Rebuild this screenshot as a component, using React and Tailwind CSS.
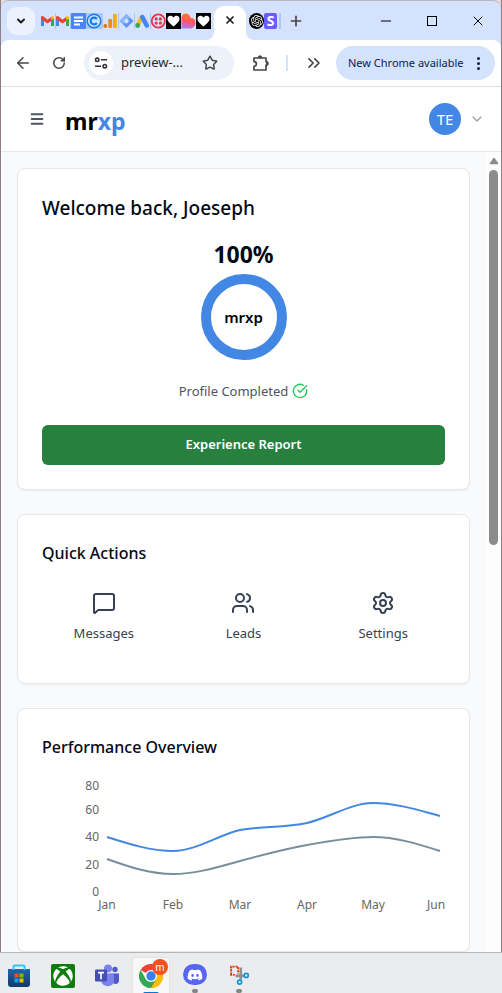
import React from "react";
import { ArrowLeft, RotateCw, Star, ChevronsRight, ChevronDown, MessageSquare, Users, Settings, CircleCheckBig, Menu, X, Plus, Minus } from "lucide-react";
import { FaDiscord, FaXbox } from "react-icons/fa";
import { SiOpenai } from "react-icons/si";

function Gmail() {
  return (
    <svg viewBox="0 0 15 16" className="h-4 w-[15px] shrink-0">
      <path d="M14.500 0v16" stroke="#a8c7fa" />
      <path d="M0 13V4l3 2v7z" fill="#4285f4" />
      <path d="M10 13V6l3-2v9z" fill="#34a853" />
      <path d="M10 6.500V3.500L12 3l1 1v2z" fill="#fbbc04" />
      <path d="M0 6V3.500L2 3l4.500 3.700L10 4v4L6.500 10.500z" fill="#ea4335" />
    </svg>
  );
}

function Docs() {
  return (
    <svg viewBox="0 0 15 16" className="h-4 w-[15px] shrink-0">
      <rect width="15" height="16" rx="1" fill="#4c86f0" />
      <path d="M3 4.500h9M3 8h9M3 11.500h6" stroke="#fff" strokeWidth="1.800" />
    </svg>
  );
}

function Calendly() {
  return (
    <svg viewBox="0 0 16 16" className="h-4 w-4 shrink-0">
      <rect width="16" height="16" fill="#a8c9fb" />
      <circle cx="8" cy="8" r="6.800" fill="#c5e6ff" stroke="#1878f0" strokeWidth="1.400" />
      <path d="M10.800 6a3.400 3.400 0 1 0 0 4" fill="none" stroke="#1878f0" strokeWidth="2.200" />
    </svg>
  );
}

function Analytics() {
  return (
    <svg viewBox="0 0 16 16" className="h-4 w-4 shrink-0">
      <path d="M.500 0v16" stroke="#a8c7fa" />
      <rect x="11" y="1" width="3.800" height="14" rx="1.200" fill="#f9ab00" />
      <rect x="6.300" y="6" width="3.800" height="9" rx="1.200" fill="#e98a1f" />
      <circle cx="3.300" cy="13" r="1.900" fill="#e37400" />
    </svg>
  );
}

function TagManager() {
  return (
    <svg viewBox="0 0 16 16" className="h-4 w-4 shrink-0">
      <path d="M.500 0v16" stroke="#a8c7fa" />
      <path d="M8.500 1 15.500 8l-7 7-7-7z" fill="#5f94f3" />
      <path d="M8.500 1 12 4.500 5 11.500 1.500 8z" fill="#8ab4f8" />
      <path d="M8.500 5.300 11.200 8l-2.700 2.700L5.800 8z" fill="#d5e3fd" />
    </svg>
  );
}

function Ads() {
  return (
    <svg viewBox="0 0 16 16" className="h-4 w-4 shrink-0">
      <path d="M.500 0v16" stroke="#a8c7fa" />
      <path d="M8 3.500 3.800 12" stroke="#fbbc04" strokeWidth="4" />
      <path d="M8.300 4l4.500 8.500" stroke="#4285f4" strokeWidth="4.500" strokeLinecap="round" />
      <circle cx="3.700" cy="12.500" r="2.400" fill="#34a853" />
    </svg>
  );
}

function Twilio() {
  return (
    <svg viewBox="0 0 16 16" className="h-4 w-4 shrink-0">
      <path d="M.500 0v16" stroke="#a8c7fa" />
      <circle cx="8.300" cy="8" r="6.600" fill="#d4e0fb" stroke="#ee3248" strokeWidth="1.800" />
      <g fill="#ee3248">
        <circle cx="6.200" cy="5.900" r="1.600" />
        <circle cx="10.400" cy="5.900" r="1.600" />
        <circle cx="6.200" cy="10.100" r="1.600" />
        <circle cx="10.400" cy="10.100" r="1.600" />
      </g>
    </svg>
  );
}

function Heart() {
  return (
    <svg viewBox="0 0 15 16" className="h-4 w-[15px] shrink-0">
      <rect width="15" height="16" fill="#000" />
      <path d="M7.500 13.500C3 10 1.500 8 1.500 5.800 1.500 2.500 5.500 1.500 7.500 4.500c2-3 6-2 6 1.300 0 2.200-1.500 4.200-6 7.700z" fill="#fff" />
    </svg>
  );
}

function Lovable() {
  return (
    <svg viewBox="0 0 15 16" className="h-4 w-[15px] shrink-0">
      <defs>
        <linearGradient id="blend" x1="0.4" y1="0" x2="0.2" y2="1">
          <stop offset="0" stopColor="#ff7a1a" />
          <stop offset="0.5" stopColor="#ff5368" />
          <stop offset="1" stopColor="#a77bff" />
        </linearGradient>
      </defs>
      <path d="M.500 15.500V5C.500-1 9-1 9.500 5c3-.500 5 1.500 5 4.500 0 3.500-2 6-5.500 6z" fill="url(#blend)" />
    </svg>
  );
}

function SiteControls() {
  return (
    <svg viewBox="0 0 16 16" className="h-4 w-4" fill="none" stroke="#30343a" strokeWidth="1.600">
      <circle cx="4.200" cy="4.800" r="1.700" />
      <path d="M8 4.800h6M2 11.200h6" />
      <circle cx="11.800" cy="11.200" r="1.700" />
    </svg>
  );
}

function PuzzlePiece() {
  return (
    <svg viewBox="0 0 18 18" className="h-[18px] w-[18px]" fill="none" stroke="#474747" strokeWidth="1.700" strokeLinejoin="round">
      <path d="M2 4h12v3.700l1.500.600v2.400l-1.500.600V16H2v-3.600a2.400 2.400 0 0 0 0-4.800z" />
      <path d="M6.200 3.600a1.800 1.800 0 0 1 3.600 0zM14.500 7.800a1.700 1.700 0 0 1 0 3.400z" fill="#474747" strokeWidth="1" />
    </svg>
  );
}

function TabStrip() {
  return (
    <div className="flex h-10 rounded-t-lg border-t border-[#b9b4bd] bg-[#d5e2fd]">
      <div className="flex flex-1 items-center pl-[6px]">
        <button aria-label="Search tabs" className="flex h-7 w-7 shrink-0 items-center justify-center rounded-[9px] bg-[#ebf1fd]">
          <ChevronDown className="h-3 w-3 text-[#1f1f1f]" strokeWidth={4} />
        </button>
        <div className="ml-[6px] flex items-center">
          <Gmail />
          <Gmail />
          <Docs />
          <Calendly />
          <Analytics />
          <TagManager />
          <Ads />
          <Twilio />
          <Heart />
          <Lovable />
          <Heart />
        </div>
        <div className="relative ml-[3px] flex h-[34px] w-8 shrink-0 items-center justify-center self-end rounded-t-[10px] bg-white pb-[6px]">
          <span className="absolute bottom-0 right-full h-2 w-2 bg-white"><span className="block h-2 w-2 rounded-br-lg bg-[#d5e2fd]" /></span>
          <span className="absolute bottom-0 left-full h-2 w-2 bg-white"><span className="block h-2 w-2 rounded-bl-lg bg-[#d5e2fd]" /></span>
          <button aria-label="Close tab"><X className="h-3 w-3 text-[#1f1f1f]" strokeWidth={3.5} /></button>
        </div>
        <div className="ml-[3px] flex shrink-0 items-center">
          <span className="flex h-4 w-[15px] items-center justify-center rounded-full bg-black"><SiOpenai className="h-3 w-3 text-white" /></span>
          <span className="flex h-4 w-[13px] items-center justify-center rounded-[2px] bg-[#6a5cff] text-[14px] font-bold leading-4 text-white">S</span>
          <span className="ml-[2px] h-4 w-[2px] bg-[#a8c7fa]" />
        </div>
        <button aria-label="New tab" className="ml-[7px]"><Plus className="h-4 w-4 text-[#474747]" strokeWidth={2.5} /></button>
      </div>
      <div className="flex items-center text-black">
        <button aria-label="Minimize" className="flex w-[46px] justify-center"><Minus className="h-4 w-4" strokeWidth={1.5} /></button>
        <button aria-label="Maximize" className="flex w-[46px] justify-center"><span className="h-[10px] w-[10px] border border-black" /></button>
        <button aria-label="Close" className="flex w-[46px] justify-center"><X className="h-4 w-4" strokeWidth={1.5} /></button>
      </div>
    </div>
  );
}

function Toolbar() {
  return (
    <div className="bg-[#d5e2fd]">
      <div className="flex h-[47px] items-center rounded-t-lg border-b border-[#dfdfdf] bg-white pr-[6px] text-[#474747]">
        <button aria-label="Back" className="ml-[13px]"><ArrowLeft className="h-[18px] w-[18px]" strokeWidth={2} /></button>
        <button aria-label="Reload" className="ml-5"><RotateCw className="h-[14px] w-[14px]" strokeWidth={2.7} /></button>
        <div className="ml-[18px] flex h-[34px] min-w-0 flex-1 items-center rounded-full bg-[#ecf1fa] px-[5px]">
          <button aria-label="Site information" className="flex h-6 w-6 shrink-0 items-center justify-center rounded-full bg-white"><SiteControls /></button>
          <span className="ml-2 flex-1 text-[13px] text-[#26282c]">preview-...</span>
          <button aria-label="Bookmark" className="mr-[11px]"><Star className="h-4 w-4" strokeWidth={2.2} /></button>
        </div>
        <button aria-label="Extensions" className="ml-[18px]"><PuzzlePiece /></button>
        <span className="ml-[16px] h-4 w-[2px] bg-[#d3e3fd]" />
        <button aria-label="More" className="ml-[16px]"><ChevronsRight className="h-5 w-5" strokeWidth={2} /></button>
        <button className="ml-[12px] flex h-[34px] w-[159px] items-center justify-between rounded-full bg-[#d3e2fd] pl-3 pr-[15px] text-[11px] text-[#0b1f4d]">
          <span className="whitespace-nowrap">New Chrome available</span>
          <span className="flex flex-col gap-[2px]">
            <span className="h-[3px] w-[3px] rounded-full bg-[#0b1f4d]" />
            <span className="h-[3px] w-[3px] rounded-full bg-[#0b1f4d]" />
            <span className="h-[3px] w-[3px] rounded-full bg-[#0b1f4d]" />
          </span>
        </button>
      </div>
    </div>
  );
}

function AppHeader() {
  return (
    <header className="flex h-[65px] items-center border-b border-gray-200 bg-white pl-7 pr-4">
      <button aria-label="Open menu"><Menu className="h-4 w-4 text-gray-600" strokeWidth={3} /></button>
      <a href="#home" className="ml-5 pt-[3px] text-[23px] font-bold leading-8 text-black">mr<span className="text-[#4187e3]">xp</span></a>
      <button aria-label="Account" className="ml-auto flex items-center gap-2">
        <span className="flex h-8 w-8 items-center justify-center rounded-full bg-[#4187e3] text-[15px] text-white">TE</span>
        <ChevronDown className="h-4 w-4 text-gray-400" />
      </button>
    </header>
  );
}

const card = "rounded-lg border border-gray-200 bg-white px-6 shadow-xs";

function Welcome() {
  return (
    <section className={card + " pb-6 pt-6"}>
      <h1 className="text-[19px] font-medium leading-[30px] text-[#020817]">Welcome back, Joeseph</h1>
      <div className="mt-[17px] flex flex-col items-center">
        <p className="text-[23px] font-bold leading-7 text-[#020817]">100%</p>
        <div className="mt-[6px] flex h-[86px] w-[86px] items-center justify-center rounded-full border-[10px] border-[#4187e3] text-[15px] font-semibold text-black">mrxp</div>
        <p className="mt-[19px] flex items-center gap-1 text-[13px] leading-6 text-gray-600">Profile Completed <CircleCheckBig className="h-4 w-4 text-[#22c55e]" /></p>
      </div>
      <button className="mt-[22px] h-10 w-full rounded-md bg-[#28803f] text-[13px] font-semibold text-white">Experience Report</button>
    </section>
  );
}

const actions = [
  ["Messages", MessageSquare],
  ["Leads", Users],
  ["Settings", Settings],
];

function QuickActions() {
  return (
    <section className={card + " pb-10 pt-6"}>
      <h2 className="text-[16px] font-medium leading-7 text-[#020817]">Quick Actions</h2>
      <div className="mt-6 grid grid-cols-3 gap-4">
        {actions.map(([label, Icon]) => (
          <button key={label} className="flex flex-col items-center gap-2 text-[13px] leading-5 text-gray-700">
            <Icon className="h-6 w-6" />
            {label}
          </button>
        ))}
      </div>
    </section>
  );
}

function Performance() {
  return (
    <section className={card + " pb-[25px] pt-6"}>
      <h2 className="text-[16px] font-medium leading-7 text-[#020817]">Performance Overview</h2>
      <svg viewBox="0 0 403 150" className="mt-[15px] w-full text-[12px]" role="img" aria-label="Performance by month">
        <g fill="#666" textAnchor="end">
          <text x="57" y="14">80</text>
          <text x="57" y="38">60</text>
          <text x="57" y="65">40</text>
          <text x="57" y="93">20</text>
          <text x="57" y="120">0</text>
        </g>
        <g fill="#666" textAnchor="middle">
          <text x="65" y="133">Jan</text>
          <text x="131" y="133">Feb</text>
          <text x="198" y="133">Mar</text>
          <text x="265" y="133">Apr</text>
          <text x="331" y="133">May</text>
          <text x="394" y="133">Jun</text>
        </g>
        <g fill="none" strokeWidth="2">
          <path d="M65 61C87 68 109 75 131 75C154 75 176 59 198 54C220 50 243 52 265 47C287 42 309 27 331 27C354 27 376 34 398 40" stroke="#4187e3" />
          <path d="M65 83C87 91 109 98 131 98C154 98 176 91 198 85C220 79 243 73 265 69C287 65 309 61 331 61C354 61 376 68 398 75" stroke="#788f9b" />
        </g>
      </svg>
    </section>
  );
}

function Scrollbar() {
  return (
    <div className="flex w-[15px] flex-col items-center bg-[#fcfcfc] pt-[5px]">
      <svg viewBox="0 0 10 8" className="h-2 w-[10px]"><path d="M5 1.500 8.500 6.500h-7z" fill="#8b8b8b" stroke="#8b8b8b" strokeWidth="1.500" strokeLinejoin="round" /></svg>
      <div className="mt-[5px] h-[375px] w-[9px] rounded-full bg-[#8b8b8b]" />
    </div>
  );
}

function StoreIcon() {
  return (
    <svg viewBox="0 0 24 24" className="h-6 w-6">
      <defs>
        <linearGradient id="bag" x1="0" y1="0" x2="0" y2="1">
          <stop offset="0" stopColor="#1e66a8" />
          <stop offset="1" stopColor="#123a68" />
        </linearGradient>
      </defs>
      <path d="M1 5h22v15a3 3 0 0 1-3 3H4a3 3 0 0 1-3-3z" fill="url(#bag)" />
      <path d="M6.500 6V2.500a1 1 0 0 1 1-1h9a1 1 0 0 1 1 1V6" fill="none" stroke="#32c5f4" strokeWidth="2" />
      <path d="M7.500 9.500h4v4h-4z" fill="#f25022" />
      <path d="M12.500 9.500h4v4h-4z" fill="#7fba00" />
      <path d="M7.500 14.500h4v4h-4z" fill="#00a4ef" />
      <path d="M12.500 14.500h4v4h-4z" fill="#ffb900" />
    </svg>
  );
}

function TeamsIcon() {
  return (
    <svg viewBox="0 0 24 24" className="h-6 w-6">
      <circle cx="20" cy="5.500" r="2.700" fill="#5059c9" />
      <path d="M16 9.500h8v7c0 4.500-6 4.500-7 1z" fill="#5059c9" />
      <circle cx="13" cy="4.500" r="4" fill="#7b83eb" />
      <path d="M6 9.500h13v7c0 7.500-12 7.500-13 0z" fill="#7b83eb" />
      <rect y="5.500" width="12" height="12" rx="1" fill="#464eb8" />
      <path d="M3 8.700h6M6 8.700v6.500" stroke="#fff" strokeWidth="1.700" />
    </svg>
  );
}

function ChromeIcon() {
  return (
    <svg viewBox="0 0 24 24" className="h-6 w-6">
      <path d="M12 12 1.600 6A12 12 0 0 1 22.400 6z" fill="#ea4335" />
      <path d="M12 12 22.400 6A12 12 0 0 1 12 24z" fill="#fbbc04" />
      <path d="M12 6h10.400A12 12 0 0 1 12 24l5.200-9z" fill="#fbbc04" />
      <path d="M1.600 6A12 12 0 0 0 12 24l5.200-9H12L6.800 15z" fill="#34a853" />
      <circle cx="12" cy="12" r="6" fill="#fff" />
      <circle cx="12" cy="12" r="4.700" fill="#3b7ded" />
    </svg>
  );
}

function SnipIcon() {
  return (
    <svg viewBox="0 0 24 24" className="h-6 w-6" fill="none">
      <path d="M3 12V3h8v8" stroke="#d83b01" strokeWidth="2.200" strokeDasharray="2.400 1.100" />
      <path d="M2 12.300h5" stroke="#d83b01" strokeWidth="2" strokeDasharray="2.200 1" />
      <path d="M14 4v14M8 13.500h10" stroke="#8a9096" strokeWidth="3" />
      <circle cx="20.300" cy="13" r="2.300" fill="#d9effa" stroke="#1593d8" strokeWidth="1.900" />
      <circle cx="12.700" cy="20.700" r="2.300" fill="#d9effa" stroke="#1593d8" strokeWidth="1.900" />
    </svg>
  );
}

function TaskButton({ label, children, running }) {
  return (
    <button aria-label={label} className="flex h-10 w-11 shrink-0 flex-col items-center pt-[11px]">
      {children}
      {running && <span className="mt-1 h-1 w-[6px] shrink-0 rounded-full bg-[#858585]" />}
    </button>
  );
}

function Taskbar() {
  return (
    <nav aria-label="Taskbar" className="-ml-[3px] flex h-[41px] overflow-hidden border-t border-[#b5b5b5] bg-[#ebecee]">
      <TaskButton label="Store"><StoreIcon /></TaskButton>
      <TaskButton label="Xbox">
        <span className="flex h-6 w-6 items-center justify-center rounded-[2px] bg-[#107c10]"><FaXbox className="h-5 w-5 text-white" /></span>
      </TaskButton>
      <TaskButton label="Teams"><TeamsIcon /></TaskButton>
      <button aria-label="Chrome" className="mx-[3px] mt-1 flex h-9 w-[38px] shrink-0 flex-col items-center rounded-t border border-b-0 border-[#e3e3e3] bg-[#f8f8f9] pt-[6px]">
        <span className="relative">
          <ChromeIcon />
          <span className="absolute -right-[5px] -top-[5px] flex h-4 w-4 items-center justify-center rounded-full bg-[#f4511e] pb-px text-[10px] leading-4 text-white">m</span>
        </span>
        <span className="mt-1 h-1 w-4 shrink-0 rounded-full bg-[#0078d4]" />
      </button>
      <TaskButton label="Discord" running>
        <span className="flex h-6 w-6 items-center justify-center rounded-full bg-[#5865f2]"><FaDiscord className="h-4 w-4 text-white" /></span>
      </TaskButton>
      <TaskButton label="Snipping Tool" running><SnipIcon /></TaskButton>
    </nav>
  );
}

export default function App() {
  return (
    <div className="flex min-h-screen flex-col overflow-hidden bg-[#ebecee] font-['Noto_Sans',sans-serif]">
      <div className="flex flex-1 flex-col border-x border-[#8d7f84] bg-[#e8dcd8]">
        <TabStrip />
        <Toolbar />
        <AppHeader />
        <div className="flex flex-1 bg-[#f9fafc]">
          <main className="flex min-w-0 flex-1 flex-col gap-6 p-4 pb-0">
            <Welcome />
            <QuickActions />
            <Performance />
          </main>
          <Scrollbar />
        </div>
      </div>
      <Taskbar />
    </div>
  );
}
